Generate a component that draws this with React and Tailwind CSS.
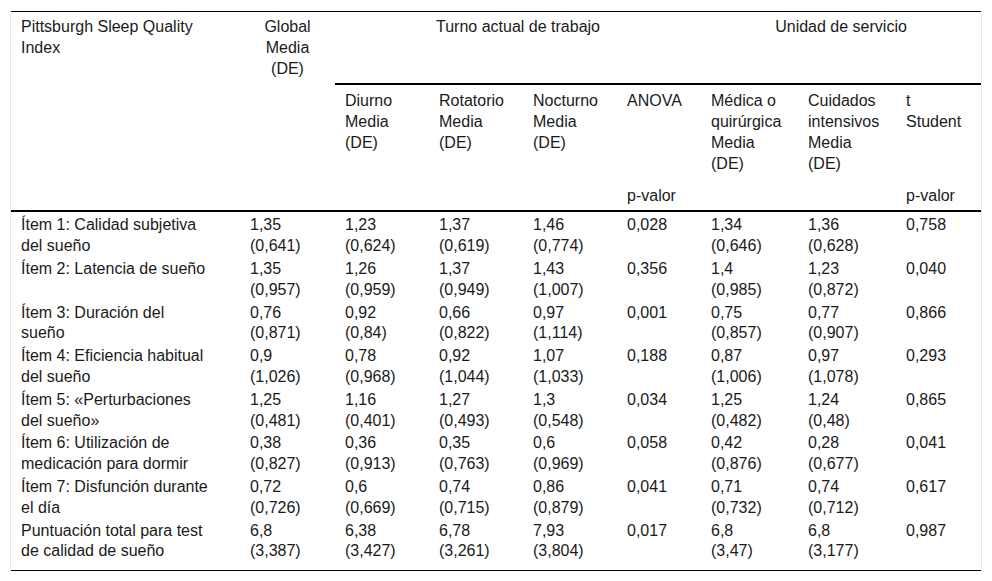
import React from "react";

const rows = [
  ["Ítem 1: Calidad subjetiva del sueño", ["1,35", "(0,641)"], ["1,23", "(0,624)"], ["1,37", "(0,619)"], ["1,46", "(0,774)"], "0,028", ["1,34", "(0,646)"], ["1,36", "(0,628)"], "0,758"],
  ["Ítem 2: Latencia de sueño", ["1,35", "(0,957)"], ["1,26", "(0,959)"], ["1,37", "(0,949)"], ["1,43", "(1,007)"], "0,356", ["1,4", "(0,985)"], ["1,23", "(0,872)"], "0,040"],
  ["Ítem 3: Duración del sueño", ["0,76", "(0,871)"], ["0,92", "(0,84)"], ["0,66", "(0,822)"], ["0,97", "(1,114)"], "0,001", ["0,75", "(0,857)"], ["0,77", "(0,907)"], "0,866"],
  ["Ítem 4: Eficiencia habitual del sueño", ["0,9", "(1,026)"], ["0,78", "(0,968)"], ["0,92", "(1,044)"], ["1,07", "(1,033)"], "0,188", ["0,87", "(1,006)"], ["0,97", "(1,078)"], "0,293"],
  ["Ítem 5: «Perturbaciones del sueño»", ["1,25", "(0,481)"], ["1,16", "(0,401)"], ["1,27", "(0,493)"], ["1,3", "(0,548)"], "0,034", ["1,25", "(0,482)"], ["1,24", "(0,48)"], "0,865"],
  ["Ítem 6: Utilización de medicación para dormir", ["0,38", "(0,827)"], ["0,36", "(0,913)"], ["0,35", "(0,763)"], ["0,6", "(0,969)"], "0,058", ["0,42", "(0,876)"], ["0,28", "(0,677)"], "0,041"],
  ["Ítem 7: Disfunción durante el día", ["0,72", "(0,726)"], ["0,6", "(0,669)"], ["0,74", "(0,715)"], ["0,86", "(0,879)"], "0,041", ["0,71", "(0,732)"], ["0,74", "(0,712)"], "0,617"],
  ["Puntuación total para test de calidad de sueño", ["6,8", "(3,387)"], ["6,38", "(3,427)"], ["6,78", "(3,261)"], ["7,93", "(3,804)"], "0,017", ["6,8", "(3,47)"], ["6,8", "(3,177)"], "0,987"],
];

const widths = [229, 95, 94, 94, 94, 84, 97, 98, 85];

function Cell({ v }) {
  if (Array.isArray(v)) {
    return (
      <>
        {v[0]}
        <br />
        {v[1]}
      </>
    );
  }
  return v;
}

export default function App() {
  return (
    <div className="w-[992px] h-[581px] bg-white text-[#1a1a1a] pl-[10px] pt-[11px]" style={{ fontFamily: '"Liberation Sans", Arial, sans-serif' }}>
      <div className="w-[972px] border-l border-r border-[#e8e8e8]">
        <table className="border-collapse table-fixed w-[970px] text-[16px] leading-[20.8px]">
          <colgroup>
            {widths.map((w, i) => (
              <col key={i} style={{ width: w }} />
            ))}
          </colgroup>
          <thead>
            <tr className="border-t border-black">
              <th className="align-top text-left font-normal pl-[10px] pr-[30px] pt-[5px] pb-[5px]">
                Pittsburgh Sleep Quality Index
              </th>
              <th className="align-top text-center font-normal px-[6px] pt-[5px] pb-[5px]">
                Global
                <br />
                Media
                <br />
                (DE)
              </th>
              <th colSpan={4} className="align-top text-center font-normal px-[6px] pt-[5px] pb-[5px] border-b-2 border-black">
                Turno actual de trabajo
              </th>
              <th colSpan={3} className="align-top text-center font-normal px-[6px] pt-[5px] pb-[5px] border-b-2 border-black">
                Unidad de servicio
              </th>
            </tr>
            <tr>
              <th className="p-0" />
              <th className="p-0" />
              {[
                ["Diurno", "Media", "(DE)"],
                ["Rotatorio", "Media", "(DE)"],
                ["Nocturno", "Media", "(DE)"],
                ["ANOVA"],
                ["Médica o", "quirúrgica", "Media", "(DE)"],
                ["Cuidados", "intensivos", "Media", "(DE)"],
                ["t", "Student"],
              ].map((lines, i) => (
                <th key={i} className="align-top text-left font-normal pl-[10px] pr-[2px] pt-[6px] pb-[5px]">
                  {lines.map((l, j) => (
                    <div key={j}>{l}</div>
                  ))}
                </th>
              ))}
            </tr>
            <tr className="border-b-2 border-black">
              {["", "", "", "", "", "p-valor", "", "", "p-valor"].map((t, i) => (
                <th key={i} className="align-top text-left font-normal pl-[10px] pr-[2px] pt-[6px] pb-[4px]">
                  {t}
                </th>
              ))}
            </tr>
          </thead>
          <tbody className="border-b border-black">
            {rows.map((r, ri) => {
              const last = ri === rows.length - 1;
              const first = ri === 0;
              const pad = last ? "pt-[2px] pb-[8px]" : first ? "pt-[3px] pb-0" : "pt-[2px] pb-0";
              return (
                <tr key={ri}>
                  {r.map((v, ci) => (
                    <td key={ci} className={`align-top text-left pl-[10px] ${ci === 0 ? "pr-[30px]" : "pr-[4px]"} ${pad}`}>
                      <Cell v={v} />
                    </td>
                  ))}
                </tr>
              );
            })}
          </tbody>
        </table>
      </div>
    </div>
  );
}
